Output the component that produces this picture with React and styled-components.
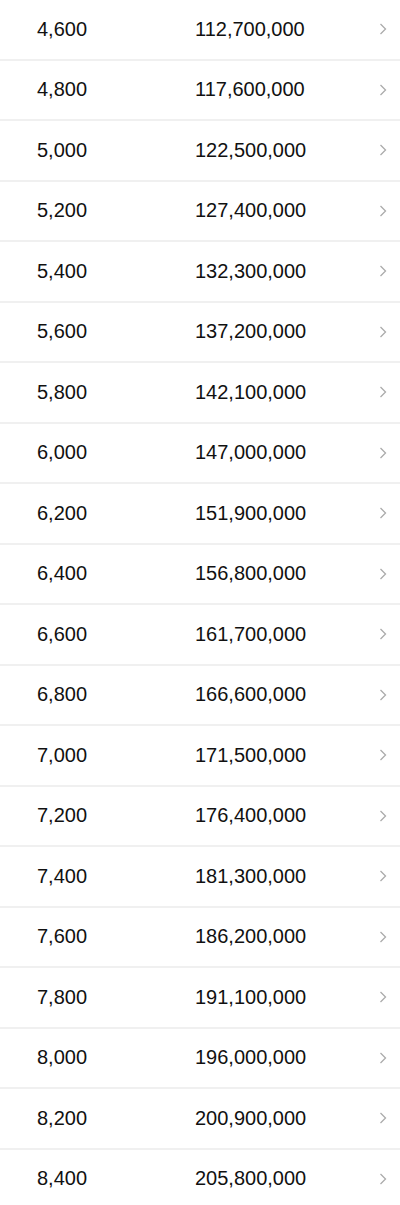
import React from 'react';
import styled, { createGlobalStyle } from 'styled-components';

const GlobalStyle = createGlobalStyle`
    body {
        margin: 0;
        background: #fff;
        font-family: 'Liberation Sans', Arial, sans-serif;
    }
`;

const List = styled.div`
    display: flex;
    flex-direction: column;
    background: #fff;
`;

const Row = styled.div`
    display: flex;
    align-items: center;
    height: 58.5px;
    padding: 0 13px 0 37px;
    border-bottom: ${props => (props.last ? 'none' : '2px solid #f0f0f0')};
    color: #111;
    font-size: 20px;
`;

const Amount = styled.span`
    width: 158px;
`;

const Total = styled.span`
    flex: 1;
`;

const Chevron = styled.svg`
    width: 8px;
    height: 12px;
    flex-shrink: 0;
`;

const rows = [];
for (let v = 4600; v <= 8400; v += 200) {
    rows.push({ amount: v, total: v * 24500 });
}

const fmt = n => n.toLocaleString('en-US');

const App = () => {
    return (
        <>
            <GlobalStyle />
            <List>
                {rows.map((row, index) => (
                    <Row key={row.amount} last={index === rows.length - 1}>
                        <Amount>{fmt(row.amount)}</Amount>
                        <Total>{fmt(row.total)}</Total>
                        <Chevron viewBox="0 0 8 12">
                            <path d="M1.5 1 L6.5 6 L1.5 11" fill="none" stroke="#ababab" strokeWidth="1.3" />
                        </Chevron>
                    </Row>
                ))}
            </List>
        </>
    );
};

export default App;
